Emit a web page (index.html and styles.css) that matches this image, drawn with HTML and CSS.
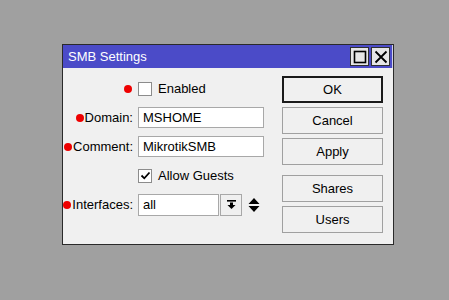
FILE: index.html
```html
<!DOCTYPE html>
<html>
<head>
<meta charset="utf-8">
<link rel="stylesheet" href="styles.css">
</head>
<body>
<div class="desk">
  <div class="window">
    <div class="titlebar">
      <span class="title">SMB Settings</span>
      <div class="tbtns">
        <span class="tbtn"><svg width="14" height="14" viewBox="0 0 14 14"><rect x="1.5" y="1.5" width="11" height="11" fill="none" stroke="#000" stroke-width="1.6"/></svg></span>
        <span class="tbtn"><svg width="14" height="14" viewBox="0 0 14 14"><path d="M1.5 1.5 L12.5 12.5 M12.5 1.5 L1.5 12.5" stroke="#000" stroke-width="1.8"/></svg></span>
      </div>
    </div>
    <div class="body">
      <div class="form">
        <div class="row">
          <div class="label"><span class="dot"></span></div>
          <div class="field"><span class="check"></span><span class="ctext">Enabled</span></div>
        </div>
        <div class="row">
          <div class="label"><span class="dot"></span>Domain:</div>
          <div class="field"><span class="input wide">MSHOME</span></div>
        </div>
        <div class="row">
          <div class="label"><span class="dot"></span>Comment:</div>
          <div class="field"><span class="input wide">MikrotikSMB</span></div>
        </div>
        <div class="row">
          <div class="label"></div>
          <div class="field"><span class="check"><svg width="11" height="11" viewBox="0 0 11 11"><path d="M1.5 5.5 L4.3 8.3 L9.5 2.5" fill="none" stroke="#000" stroke-width="1.8"/></svg></span><span class="ctext">Allow Guests</span></div>
        </div>
        <div class="row">
          <div class="label"><span class="dot"></span>Interfaces:</div>
          <div class="field">
            <span class="input narrow">all</span>
            <span class="drop"><svg width="11" height="11" viewBox="0 0 11 11"><rect x="1" y="1" width="9" height="1.6" fill="#000"/><path d="M4 3.5 H7 V6 H9.5 L5.5 10 L1.5 6 H4 Z" fill="#000"/></svg></span>
            <span class="updown"><svg width="12" height="16" viewBox="0 0 12 16"><path d="M6 1 L11.5 7 H0.5 Z M6 15 L11.5 9 H0.5 Z" fill="#000"/></svg></span>
          </div>
        </div>
      </div>
      <div class="buttons">
        <div class="btn default">OK</div>
        <div class="btn">Cancel</div>
        <div class="btn">Apply</div>
        <div class="btn sep">Shares</div>
        <div class="btn">Users</div>
      </div>
    </div>
  </div>
</div>
</body>
</html>
```
FILE: styles.css
```css
html, body {
  margin: 0;
  padding: 0;
  background: #a0a0a0;
  width: 449px;
  height: 300px;
  overflow: hidden;
}
.desk {
  padding: 44px 0 0 62px;
  font-family: "Liberation Sans", Arial, sans-serif;
  font-size: 13px;
  color: #000;
}
.window {
  width: 330px;
  height: 199px;
  border: 1px solid #2a2a2a;
  background: #f0f0f0;
  display: flex;
  flex-direction: column;
}
.titlebar {
  height: 23px;
  background: #4b4bc8;
  display: flex;
  align-items: center;
  justify-content: space-between;
  padding: 0 2px 0 5px;
  border-right: 1px solid #d0d0e8;
}
.title {
  color: #fff;
  font-size: 13px;
}
.tbtns {
  display: flex;
  gap: 2px;
}
.tbtn {
  width: 17px;
  height: 17px;
  background: #e6e6e6;
  border: 1px solid #303030;
  display: flex;
  align-items: center;
  justify-content: center;
}
.body {
  flex: 1;
  display: flex;
  justify-content: space-between;
  padding: 8px 10px 0 0;
}
.form {
  display: flex;
  flex-direction: column;
  gap: 8px;
  padding-top: 2px;
}
.row {
  display: flex;
  align-items: center;
  height: 21px;
}
.label {
  width: 70px;
  display: flex;
  justify-content: flex-end;
  align-items: center;
  padding-right: 5px;
  white-space: nowrap;
}
.dot {
  width: 8px;
  height: 8px;
  border-radius: 50%;
  background: #ee0000;
  margin-right: 1px;
}
.field {
  display: flex;
  align-items: center;
}
.check {
  width: 12px;
  height: 12px;
  border: 1px solid #8c8c8c;
  background: #fff;
  display: flex;
  align-items: center;
  justify-content: center;
}
.ctext {
  margin-left: 6px;
}
.input {
  height: 19px;
  line-height: 19px;
  border: 1px solid #a8a8a8;
  background: #fff;
  padding-left: 4px;
  box-sizing: content-box;
}
.wide { width: 120px; }
.narrow { width: 75px; height: 20px; line-height: 20px; }
.drop {
  width: 20px;
  height: 20px;
  margin-left: 1px;
  border: 1px solid #a8a8a8;
  background: #f0f0f0;
  display: flex;
  align-items: center;
  justify-content: center;
}
.updown {
  margin-left: 6px;
  display: flex;
  align-items: center;
}
.buttons {
  display: flex;
  flex-direction: column;
  gap: 4px;
}
.btn {
  width: 99px;
  height: 25px;
  border: 1px solid #a0a0a0;
  background: #f0f0f0;
  display: flex;
  align-items: center;
  justify-content: center;
  font-size: 13px;
}
.btn.default {
  border: 2px solid #1a1a1a;
  width: 97px;
  height: 23px;
}
.btn.sep {
  margin-top: 6px;
}
```
